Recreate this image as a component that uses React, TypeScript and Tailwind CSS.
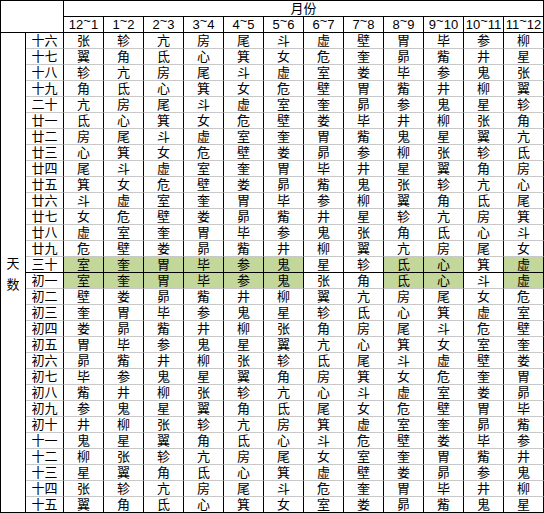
const SEQ = '角亢氐房心尾箕斗女虚危室壁奎娄胃昴毕觜参井鬼柳星张翼轸';

const months = ['12~1', '1~2', '2~3', '3~4', '4~5', '5~6', '6~7', '7~8', '8~9', '9~10', '10~11', '11~12'];

const days = [
  '十六', '十七', '十八', '十九', '二十',
  '廿一', '廿二', '廿三', '廿四', '廿五', '廿六', '廿七', '廿八', '廿九', '三十',
  '初一', '初二', '初三', '初四', '初五', '初六', '初七', '初八', '初九', '初十',
  '十一', '十二', '十三', '十四', '十五',
];

// index into SEQ for 十六 and for 初一, per month column
const fromSixteenth = [24, 26, 1, 3, 5, 7, 9, 12, 15, 17, 19, 22];
const fromFirst = [11, 13, 15, 17, 19, 21, 24, 0, 2, 4, 7, 9];

function mansion(row: number, col: number) {
  if (row < 15) return SEQ[(fromSixteenth[col] + row) % 27];
  return SEQ[(fromFirst[col] + row - 15) % 27];
}

function MonthLabel({ text }: { text: string }) {
  const [a, b] = text.split('~');
  return (
    <span>
      {a}
      <span className="relative -top-[4px]">~</span>
      {b}
    </span>
  );
}

export default function App() {
  return (
    <div className="bg-white w-[544px] h-[513px] font-['Liberation_Sans','Noto_Sans_CJK_SC',sans-serif] text-[13px] text-black">
      <div className="grid grid-cols-[25px_38px_repeat(12,40px)] grid-rows-[repeat(32,16px)] border-l border-t border-black">
        {/* header */}
        <div className="col-span-2 row-span-2 border-r border-b border-black" />
        <div className="col-span-12 flex items-center justify-center leading-[15px] border-r border-b border-black">
          月份
        </div>
        {months.map((m) => (
          <div
            key={m}
            className="flex items-center justify-center leading-[15px] border-r border-b border-black"
          >
            <MonthLabel text={m} />
          </div>
        ))}

        {/* left label */}
        <div className="row-span-30 flex flex-col items-center justify-center pt-[3px] leading-[21px] border-r border-b border-black">
          <span>天</span>
          <span>数</span>
        </div>

        {days.map((d, row) => {
          const dark = row === 14 || row === 29;
          const lineClass = dark ? 'border-b-black' : 'border-b-[#c8c8c8]';
          return [
            <div
              key={d}
              className={`flex items-center justify-center leading-[15px] border-r border-b border-r-black ${lineClass}`}
            >
              {d}
            </div>,
            ...months.map((m, col) => {
              const same = mansion(14, col) === mansion(15, col);
              const green = same && (row === 14 || row === 15);
              return (
                <div
                  key={d + m}
                  className={`flex items-center justify-center leading-[15px] border-r border-b border-r-black ${lineClass} ${
                    green ? 'bg-[#c4d79b]' : ''
                  }`}
                >
                  {mansion(row, col)}
                </div>
              );
            }),
          ];
        })}
      </div>
    </div>
  );
}
